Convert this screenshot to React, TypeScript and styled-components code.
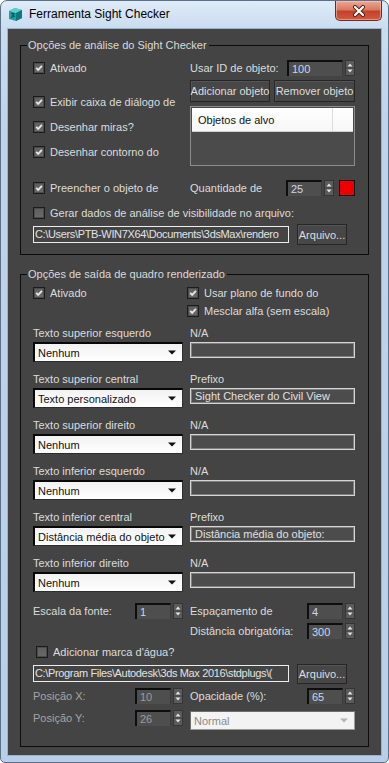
import React from 'react';
import styled, { createGlobalStyle } from 'styled-components';

const GlobalStyle = createGlobalStyle`
  html, body {
    margin: 0;
    padding: 0;
    background: #ffffff;
  }
  body {
    font-family: 'Liberation Sans', Arial, sans-serif;
    font-size: 11px;
  }
`;

const Window = styled.div`
  box-sizing: border-box;
  width: 389px;
  height: 763px;
  display: flex;
  flex-direction: column;
  border: 1px solid #5c7089;
  border-radius: 7px 7px 5px 5px;
  background: linear-gradient(180deg, #dfebf7 0px, #c9dcf0 28px, #bfd4eb 120px, #b9cfe8 100%);
  overflow: hidden;
`;

const TitleBar = styled.div`
  height: 28px;
  display: flex;
  align-items: flex-start;
  padding-left: 7px;
`;

const AppIcon = styled.svg`
  margin-top: 6px;
  flex: none;
`;

const Title = styled.div`
  margin: 6px 0 0 6px;
  font-size: 12px;
  line-height: 15px;
  color: #000000;
  flex: 1;
`;

const CloseButton = styled.div`
  box-sizing: border-box;
  width: 47px;
  height: 20px;
  margin-right: 6px;
  display: flex;
  align-items: center;
  justify-content: center;
  border: 1px solid #6e2a1f;
  border-top: none;
  border-radius: 0 0 5px 5px;
  background: linear-gradient(180deg, #e9a897 0%, #d97a63 45%, #c2432a 55%, #d5583b 100%);
  box-shadow: inset 0 0 0 1px rgba(255, 210, 200, 0.5);
`;

const Client = styled.div`
  box-sizing: border-box;
  width: 373px;
  height: 726px;
  margin: 0 0 0 7px;
  padding: 10px 12px 0 12px;
  display: flex;
  flex-direction: column;
  gap: 13px;
  background: #444444;
  outline: 1px solid #9bb2cb;
`;

const Group = styled.fieldset<{ $pt: number; $pb: number }>`
  margin: 0;
  padding: ${p => p.$pt}px 13px ${p => p.$pb}px 12px;
  border: 1px solid #0c0c0c;
  min-width: 0;
`;

const Legend = styled.legend`
  margin-left: -6px;
  padding: 0 2px 0 1px;
  color: #dadada;
  line-height: 13px;
`;

const TwoCols = styled.div<{ $mt?: number }>`
  display: grid;
  grid-template-columns: 150px 165px;
  column-gap: 7px;
  align-items: start;
  margin-top: ${p => p.$mt ?? 0}px;
`;

const Stack = styled.div<{ $gap: number; $mt?: number }>`
  display: flex;
  flex-direction: column;
  gap: ${p => p.$gap}px;
  margin-top: ${p => p.$mt ?? 0}px;
`;

const Text = styled.span<{ $dim?: boolean }>`
  color: ${p => (p.$dim ? '#a4a4a4' : '#dcdcdc')};
  white-space: nowrap;
  line-height: 13px;
`;

const CheckRow = styled.div<{ $mt?: number; $shift?: number }>`
  display: flex;
  align-items: center;
  height: 16px;
  gap: 5px;
  margin-top: ${p => p.$mt ?? 0}px;
  margin-left: ${p => p.$shift ?? 0}px;
`;

const Box = styled.div`
  box-sizing: border-box;
  width: 12px;
  height: 12px;
  border: 1px solid #1b1b1b;
  background: linear-gradient(180deg, #5e5e5e, #6a6a6a);
  box-shadow: inset 0 0 0 1px #4c4c4c;
  display: flex;
  align-items: center;
  justify-content: center;
  flex: none;
`;

const FieldRow = styled.div<{ $mt?: number }>`
  display: flex;
  align-items: center;
  justify-content: space-between;
  height: 16px;
  margin-top: ${p => p.$mt ?? 0}px;
`;

const SpinWrap = styled.div<{ $push?: boolean }>`
  display: flex;
  align-items: stretch;
  height: 16px;
  flex: none;
  margin-left: ${p => (p.$push ? 'auto' : '0')};
`;

const SpinField = styled.div<{ $w: number; $dim?: boolean }>`
  box-sizing: border-box;
  width: ${p => p.$w}px;
  border-style: solid;
  border-color: #0e0e0e #3c3c3c #3c3c3c #0e0e0e;
  border-width: 2px 1px 0 2px;
  background: #4e4e4e;
  color: ${p => (p.$dim ? '#9c9c9c' : '#c9d6ee')};
  padding-left: 3px;
  line-height: 14px;
`;

const SpinButtons = styled.div`
  box-sizing: border-box;
  width: 10px;
  margin-left: 2px;
  background: #5b5b5b;
  border: 1px solid #353535;
  display: flex;
  align-items: center;
  justify-content: center;
`;

const ColorSwatch = styled.div<{ $color: string }>`
  box-sizing: border-box;
  width: 16px;
  height: 16px;
  margin-left: 5px;
  border: 1px solid #111111;
  background: ${p => p.$color};
  flex: none;
`;

const Button = styled.div<{ $w: number; $h: number }>`
  box-sizing: border-box;
  width: ${p => p.$w}px;
  height: ${p => p.$h}px;
  display: flex;
  align-items: center;
  justify-content: center;
  background: #474747;
  border: 1px solid #262626;
  box-shadow: inset 1px 1px 0 #555555;
  color: #dedede;
  white-space: nowrap;
  flex: none;
`;

const ButtonRow = styled.div`
  display: flex;
  justify-content: space-between;
`;

const ListBox = styled.div`
  box-sizing: border-box;
  height: 60px;
  border: 1px solid #8c8c8c;
  background: #4b4b4b;
  padding: 1px;
`;

const ListHeader = styled.div`
  display: grid;
  grid-template-columns: 1fr 21px;
  height: 23px;
  background: linear-gradient(180deg, #ffffff, #f7f7f7);
  border-bottom: 1px solid #d0d0d0;
`;

const HeaderCell = styled.div<{ $last?: boolean }>`
  display: flex;
  align-items: center;
  padding-left: ${p => (p.$last ? 0 : 6)}px;
  border-left: ${p => (p.$last ? '1px solid #dcdcdc' : 'none')};
  color: #111111;
`;

const PathRow = styled.div<{ $mt: number }>`
  display: flex;
  align-items: center;
  gap: 8px;
  height: 21px;
  margin-top: ${p => p.$mt}px;
`;

const PathField = styled.div`
  box-sizing: border-box;
  width: 256px;
  height: 17px;
  border: 1px solid #ececec;
  background: #444444;
  color: #e2e2e2;
  padding-left: 1px;
  line-height: 15px;
  letter-spacing: -0.35px;
  white-space: nowrap;
  overflow: hidden;
`;

const TextBlock = styled.div`
  display: grid;
  grid-template-columns: 150px 165px;
  grid-template-rows: 13px 20px;
  column-gap: 7px;
  row-gap: 2px;
`;

const Combo = styled.div<{ $disabled?: boolean }>`
  box-sizing: border-box;
  height: ${p => (p.$disabled ? 19 : 20)}px;
  display: flex;
  align-items: center;
  justify-content: space-between;
  padding: 0 6px 0 3px;
  background: ${p => (p.$disabled ? '#f3f3f3' : 'linear-gradient(180deg, #f2f2f2, #ffffff)')};
  border-style: solid;
  border-color: ${p => (p.$disabled ? '#6e6e6e #9a9a9a #9a9a9a #6e6e6e' : '#080808 #2e2e2e #2e2e2e #080808')};
  border-width: ${p => (p.$disabled ? '1px' : '2px 1px 1px 2px')};
  color: ${p => (p.$disabled ? '#8a8a8a' : '#111111')};
  white-space: nowrap;
`;

const InputBox = styled.div`
  box-sizing: border-box;
  height: 16px;
  border: 1px solid #d6d6d6;
  box-shadow: inset 0 0 0 1px #7e7e7e;
  background: #4c4c4c;
  color: #e0e0e0;
  padding-left: 4px;
  line-height: 14px;
  white-space: nowrap;
  overflow: hidden;
`;

const Cell = styled.div<{ $gap: number }>`
  display: flex;
  flex-direction: column;
  gap: ${p => p.$gap}px;
`;

const Check = ({ checked, label, mt, shift }: { checked?: boolean; label: string; mt?: number; shift?: number }) => (
  <CheckRow $mt={mt} $shift={shift}>
    <Box>
      {checked && (
        <svg width="8" height="8" viewBox="0 0 8 8">
          <path d="M1.2 3.8 L3.2 5.9 L6.9 1.8" stroke="#e6e6e6" strokeWidth="1.8" fill="none" />
        </svg>
      )}
    </Box>
    <Text>{label}</Text>
  </CheckRow>
);

const Spinner = ({ value, width, dim, push }: { value: string; width: number; dim?: boolean; push?: boolean }) => (
  <SpinWrap $push={push}>
    <SpinField $w={width} $dim={dim}>{value}</SpinField>
    <SpinButtons>
      <svg width="8" height="14" viewBox="0 0 8 14">
        <path d="M1.5 5.5 L4 2.5 L6.5 5.5 Z" fill="#e4e4e4" />
        <line x1="0" y1="7" x2="8" y2="7" stroke="#3e3e3e" strokeWidth="1" />
        <path d="M1.5 8.5 L4 11.5 L6.5 8.5 Z" fill="#e4e4e4" />
      </svg>
    </SpinButtons>
  </SpinWrap>
);

const Arrow = ({ color }: { color: string }) => (
  <svg width="8" height="5" viewBox="0 0 8 5">
    <path d="M0 0.5 L8 0.5 L4 4.5 Z" fill={color} />
  </svg>
);

type Slot = { title: string; choice: string; caption: string; value?: string };

const slots: Slot[] = [
  { title: 'Texto superior esquerdo', choice: 'Nenhum', caption: 'N/A' },
  { title: 'Texto superior central', choice: 'Texto personalizado', caption: 'Prefixo', value: 'Sight Checker do Civil View' },
  { title: 'Texto superior direito', choice: 'Nenhum', caption: 'N/A' },
  { title: 'Texto inferior esquerdo', choice: 'Nenhum', caption: 'N/A' },
  { title: 'Texto inferior central', choice: 'Distância média do objeto', caption: 'Prefixo', value: 'Distância média do objeto:' },
  { title: 'Texto inferior direito', choice: 'Nenhum', caption: 'N/A' },
];

const App = () => (
  <>
    <GlobalStyle />
    <Window>
      <TitleBar>
        <AppIcon width="15" height="15" viewBox="0 0 15 15">
          <path d="M1 4 L7 1 L14 3 L14 11 L8 14 L1 12 Z" fill="#1f9fa3" />
          <path d="M1 4 L7 1 L14 3 L8 6 Z" fill="#5fd0cf" />
          <path d="M8 6 L14 3 L14 11 L8 14 Z" fill="#12777c" />
          <path d="M3 6 L6 6.8 L4.6 8.2 L6.2 9.2 L3 10.6" stroke="#0b4d52" strokeWidth="1.1" fill="none" />
        </AppIcon>
        <Title>Ferramenta Sight Checker</Title>
        <CloseButton>
          <svg width="14" height="12" viewBox="0 0 14 12">
            <path d="M3 2 L11 10 M11 2 L3 10" stroke="#5a1d12" strokeWidth="4" strokeLinecap="round" />
            <path d="M3 2 L11 10 M11 2 L3 10" stroke="#ffffff" strokeWidth="2.2" strokeLinecap="round" />
          </svg>
        </CloseButton>
      </TitleBar>
      <Client>
        <Group $pt={8} $pb={9}>
          <Legend>Opções de análise do Sight Checker</Legend>
          <TwoCols>
            <Stack $gap={9}>
              <Check checked label="Ativado" />
              <Check checked label="Exibir caixa de diálogo de" mt={9} />
              <Check checked label="Desenhar miras?" />
              <Check checked label="Desenhar contorno do" />
            </Stack>
            <Stack $gap={4}>
              <FieldRow>
                <Text>Usar ID de objeto:</Text>
                <Spinner value="100" width={56} />
              </FieldRow>
              <ButtonRow>
                <Button $w={80} $h={22}>Adicionar objeto</Button>
                <Button $w={81} $h={22}>Remover objeto</Button>
              </ButtonRow>
              <ListBox>
                <ListHeader>
                  <HeaderCell>Objetos de alvo</HeaderCell>
                  <HeaderCell $last />
                </ListHeader>
              </ListBox>
            </Stack>
          </TwoCols>
          <TwoCols $mt={14}>
            <Check checked label="Preencher o objeto de" />
            <FieldRow>
              <Text>Quantidade de</Text>
              <Spinner value="25" width={36} push />
              <ColorSwatch $color="#ee0000" />
            </FieldRow>
          </TwoCols>
          <Check label="Gerar dados de análise de visibilidade no arquivo:" mt={9} />
          <PathRow $mt={3}>
            <PathField>C:\Users\PTB-WIN7X64\Documents\3dsMax\rendero</PathField>
            <Button $w={50} $h={21}>Arquivo...</Button>
          </PathRow>
        </Group>

        <Group $pt={4} $pb={16}>
          <Legend>Opções de saída de quadro renderizado</Legend>
          <TwoCols>
            <Check checked label="Ativado" />
            <Stack $gap={2}>
              <Check checked label="Usar plano de fundo do" shift={-3} />
              <Check checked label="Mesclar alfa (sem escala)" shift={-3} />
            </Stack>
          </TwoCols>
          <Stack $gap={11} $mt={8}>
            {slots.map(s => (
              <TextBlock key={s.title}>
                <Text>{s.title}</Text>
                <Text>{s.caption}</Text>
                <Combo>
                  <span>{s.choice}</span>
                  <Arrow color="#111111" />
                </Combo>
                <InputBox>{s.value ?? ''}</InputBox>
              </TextBlock>
            ))}
          </Stack>
          <TwoCols $mt={11}>
            <FieldRow>
              <Text>Escala da fonte:</Text>
              <Spinner value="1" width={36} />
            </FieldRow>
            <Cell $gap={4}>
              <FieldRow>
                <Text>Espaçamento de</Text>
                <Spinner value="4" width={36} />
              </FieldRow>
              <FieldRow>
                <Text>Distância obrigatória:</Text>
                <Spinner value="300" width={36} />
              </FieldRow>
            </Cell>
          </TwoCols>
          <Check label="Adicionar marca d'água?" mt={5} shift={3} />
          <PathRow $mt={3}>
            <PathField>C:\Program Files\Autodesk\3ds Max 2016\stdplugs\(</PathField>
            <Button $w={50} $h={20}>Arquivo...</Button>
          </PathRow>
          <TwoCols $mt={4}>
            <Cell $gap={6}>
              <FieldRow>
                <Text $dim>Posição X:</Text>
                <Spinner value="10" width={36} dim />
              </FieldRow>
              <FieldRow>
                <Text $dim>Posição Y:</Text>
                <Spinner value="26" width={36} dim />
              </FieldRow>
            </Cell>
            <Cell $gap={7}>
              <FieldRow>
                <Text>Opacidade (%):</Text>
                <Spinner value="65" width={36} />
              </FieldRow>
              <Combo $disabled>
                <span>Normal</span>
                <Arrow color="#b4b4b4" />
              </Combo>
            </Cell>
          </TwoCols>
        </Group>
      </Client>
    </Window>
  </>
);

export default App;
